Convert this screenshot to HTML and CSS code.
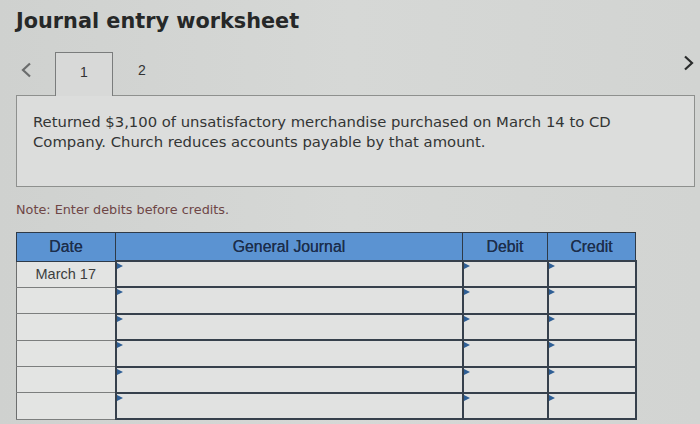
FILE: index.html
```html
<!DOCTYPE html>
<html>
<head>
<meta charset="utf-8">
<link rel="stylesheet" href="styles.css">
</head>
<body>
<div class="page">
  <h1 class="title">Journal entry worksheet</h1>
  <div class="tabs">
    <span class="chev chev-left"><svg width="12" height="16" viewBox="0 0 12 16"><path d="M10 1.5 L3 8 L10 14.5" fill="none" stroke="#6a6c6c" stroke-width="2.2"/></svg></span>
    <div class="tab active">1</div>
    <div class="tab">2</div>
    <span class="chev chev-right"><svg width="12" height="16" viewBox="0 0 12 16"><path d="M2 1.5 L9 8 L2 14.5" fill="none" stroke="#2a2c2c" stroke-width="2.2"/></svg></span>
  </div>
  <div class="panel">
    <p class="question">Returned $3,100 of unsatisfactory merchandise purchased on March 14 to CD Company. Church reduces accounts payable by that amount.</p>
  </div>
  <p class="note">Note: Enter debits before credits.</p>
  <table class="journal">
    <colgroup>
      <col class="c-date"><col class="c-gj"><col class="c-debit"><col class="c-credit">
    </colgroup>
    <thead>
      <tr><th>Date</th><th>General Journal</th><th>Debit</th><th>Credit</th></tr>
    </thead>
    <tbody>
      <tr><td class="date">March 17</td><td class="inp"></td><td class="inp"></td><td class="inp"></td></tr>
      <tr><td class="date"></td><td class="inp"></td><td class="inp"></td><td class="inp"></td></tr>
      <tr><td class="date"></td><td class="inp"></td><td class="inp"></td><td class="inp"></td></tr>
      <tr><td class="date"></td><td class="inp"></td><td class="inp"></td><td class="inp"></td></tr>
      <tr><td class="date"></td><td class="inp"></td><td class="inp"></td><td class="inp"></td></tr>
      <tr><td class="date"></td><td class="inp"></td><td class="inp"></td><td class="inp"></td></tr>
    </tbody>
  </table>
</div>
</body>
</html>
```
FILE: styles.css
```css
html, body {
  margin: 0;
  padding: 0;
}
body {
  background: linear-gradient(90deg, #cfd1cf 0%, #d6d8d6 50%, #d2d4d2 100%);
  width: 700px;
  height: 424px;
  overflow: hidden;
  font-family: "DejaVu Sans", Verdana, sans-serif;
}
.page {
  padding: 0 5px 0 16px;
}
.title {
  margin: 0;
  padding-top: 8px;
  font-size: 20.8px;
  line-height: 27px;
  font-weight: bold;
  color: #262828;
}
.tabs {
  position: relative;
  display: flex;
  align-items: flex-end;
  height: 45px;
  margin-top: 15px;
}
.chev {
  display: flex;
}
.chev-left {
  margin: 0 0 17px 4px;
}
.chev-right {
  position: absolute;
  right: 0;
  top: 5px;
}
.tab {
  width: 58px;
  height: 44px;
  box-sizing: border-box;
  display: flex;
  align-items: center;
  justify-content: center;
  padding-bottom: 6px;
  font-family: "Liberation Sans", Arial, sans-serif;
  font-size: 14px;
  color: #333;
}
.tab.active {
  margin-left: 23px;
  border: 1.5px solid #7a7c7c;
  border-bottom: none;
  background: #d8d9d8;
  position: relative;
  top: 1px;
}
.panel {
  width: 679px;
  height: 92px;
  box-sizing: border-box;
  border: 1px solid #8e908e;
  background: #dcdddc;
  padding: 16px 40px 0 16px;
}
.question {
  margin: 0;
  font-size: 14.8px;
  line-height: 20px;
  color: #333535;
}
.note {
  margin: 14px 0 0 0;
  font-size: 12.8px;
  line-height: 17px;
  color: #6e4646;
}
.journal {
  margin-top: 14px;
  border-collapse: collapse;
  width: 619px;
  table-layout: fixed;
  font-family: "Liberation Sans", Arial, sans-serif;
}
.c-date { width: 99px; }
.c-gj { width: 347px; }
.c-debit { width: 85px; }
.c-credit { width: 88px; }
.journal th {
  background: #5b93d2;
  color: #1c2e4c;
  font-weight: normal;
  font-size: 15.8px;
  height: 27px;
  padding: 0;
  border: 1.5px solid #2e3a48;
  text-shadow: 0 0 0.5px #1c2e4c;
}
.journal td {
  height: 24.4px;
  padding: 0;
}
.journal td.date {
  border: 1px solid #7c7e7e;
  border-left: 1.5px solid #6c6e6e;
  background: #e3e4e3;
  text-align: center;
  font-size: 14.5px;
  color: #3c3e3e;
}
.journal td.inp {
  position: relative;
  border: 2.5px solid #36404c;
  border-top-width: 1px;
  background: #e1e2e1;
}
.journal tbody tr:first-child td.inp {
  border-top-width: 2px;
}
.journal td.inp::before {
  content: "";
  position: absolute;
  left: 0;
  top: 1px;
  border-left: 6px solid #2f5f95;
  border-top: 3px solid transparent;
  border-bottom: 3px solid transparent;
}
```
